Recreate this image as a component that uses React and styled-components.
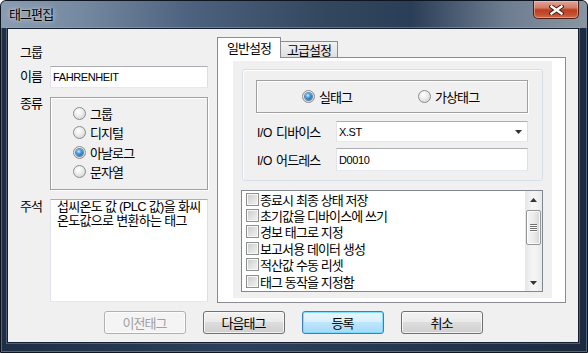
import React from 'react'
import styled, { createGlobalStyle } from 'styled-components'

const GlobalStyle = createGlobalStyle`
  html, body { margin: 0; padding: 0; background: #fff; }
  body {
    font-family: "Liberation Sans", "Noto Sans CJK KR", sans-serif;
    font-size: 13px;
    color: #000;
  }
  * { box-sizing: border-box; }
`

const Window = styled.div`
  width: 588px;
  height: 353px;
  display: flex;
  flex-direction: column;
  background: linear-gradient(90deg, #1e2e44 0%, #2c405b 40%, #24364e 70%, #1b2a3e 100%);
  border: 1px solid #0d1520;
  border-radius: 6px 6px 0 0;
  box-shadow: inset 0 0 0 1px rgba(150, 172, 200, 0.45);
  overflow: hidden;
`

const TitleBar = styled.div`
  flex: none;
  height: 27px;
  display: flex;
  justify-content: space-between;
  align-items: flex-start;
  background: linear-gradient(90deg, #8a9cb0 0%, #7488a0 14%, #4d627e 32%, #33475f 55%, #2b3e57 70%, #6d7d90 86%, #8995a1 100%);
`

const Title = styled.div`
  padding: 7px 0 0 8px;
  line-height: 14px;
  letter-spacing: -0.9px;
  color: #000;
  text-shadow: 0 0 6px rgba(255, 255, 255, 0.7), 0 0 2px rgba(255, 255, 255, 0.5);
`

const CloseButton = styled.div`
  width: 46px;
  height: 18px;
  margin-right: 8px;
  display: flex;
  align-items: center;
  justify-content: center;
  border: 1px solid #47201a;
  border-top: none;
  border-radius: 0 0 5px 5px;
  background: linear-gradient(180deg, #e3a597 0%, #d27a66 40%, #bb3f22 52%, #c5502f 80%, #d66a45 100%);
  box-shadow: inset 0 0 0 1px rgba(255, 210, 200, 0.45);
`

const Frame = styled.div`
  flex: 1;
  display: flex;
  padding: 0 8px 9px 6px;
`

const Client = styled.div`
  flex: 1;
  display: flex;
  flex-direction: column;
  gap: 8px;
  padding: 8px 12px 8px 12px;
  background: #f0f0f0;
  border: 1px solid #14202f;
  box-shadow: 0 0 0 1px rgba(170, 190, 215, 0.35);
`

const Main = styled.div`
  height: 266px;
  display: grid;
  grid-template-columns: 188px 1fr;
  column-gap: 9px;
`

const LeftColumn = styled.div`
  display: flex;
  flex-direction: column;
`

const Heading = styled.div`
  height: 29px;
  display: flex;
  align-items: center;
  letter-spacing: -0.9px;
`

const FieldRow = styled.div`
  display: grid;
  grid-template-columns: 30px 158px;
  height: ${p => p.$h}px;
  margin-top: ${p => p.$mt || 0}px;
`

const Label = styled.div`
  letter-spacing: -0.9px;
  line-height: 14px;
  padding-top: ${p => p.$pt || 0}px;
  align-self: ${p => (p.$center ? 'center' : 'start')};
`

const Edit = styled.div`
  background: #fff;
  border: 1px solid;
  border-color: #abadb3 #dbdfe6 #e3e9ef #e2e3ea;
  padding-left: 2px;
  display: flex;
  align-items: center;
  font-size: 11px;
  letter-spacing: -0.4px;
`

const Combo = styled(Edit)`
  justify-content: space-between;
  padding-right: 5px;
`

const Memo = styled.div`
  background: #fff;
  border: 1px solid;
  border-color: #abadb3 #dbdfe6 #e3e9ef #e2e3ea;
  padding: 0 0 0 6px;
  line-height: 14px;
  letter-spacing: -0.7px;
  white-space: nowrap;
  overflow: hidden;
`

const Sunken = styled.div`
  border: 1px solid #a0a0a0;
  box-shadow: 1px 1px 0 #fff, inset 1px 1px 0 #fff;
`

const TypeBox = styled(Sunken)`
  display: flex;
  flex-direction: column;
  padding: 6px 0 0 22px;
`

const RadioItem = styled.div`
  height: 19.3px;
  display: flex;
  align-items: center;
  gap: 4px;
  letter-spacing: -0.9px;
`

const RadioDot = styled.span`
  width: 13px;
  height: 13px;
  flex: none;
  border-radius: 50%;
  border: 1px solid #8a8c8e;
  background: radial-gradient(circle at 40% 35%, #ffffff 0%, #ececec 45%, #c7c9cb 100%);
  display: flex;
  align-items: center;
  justify-content: center;
  &::after {
    content: '';
    width: 7px;
    height: 7px;
    border-radius: 50%;
    display: ${p => (p.$on ? 'block' : 'none')};
    background: radial-gradient(circle at 40% 35%, #c4ecff 0%, #3a9be0 40%, #0f4e8e 100%);
    box-shadow: 0 0 0 1px rgba(20, 60, 110, 0.6);
  }
`

const RightColumn = styled.div`
  display: flex;
  flex-direction: column;
`

const TabStrip = styled.div`
  height: 20px;
  display: flex;
  align-items: flex-end;
`

const Tab = styled.div`
  height: ${p => (p.$active ? 21 : 16)}px;
  width: ${p => (p.$active ? 64 : 58)}px;
  margin-left: ${p => (p.$active ? 0 : -1)}px;
  margin-bottom: ${p => (p.$active ? -1 : 0)}px;
  position: relative;
  z-index: ${p => (p.$active ? 1 : 0)};
  display: flex;
  align-items: center;
  justify-content: center;
  padding-bottom: ${p => (p.$active ? 2 : 0)}px;
  border: 1px solid #898c95;
  border-bottom: none;
  background: ${p => (p.$active ? '#fff' : 'linear-gradient(180deg, #f2f2f2 0%, #e9e9e9 50%, #dedede 100%)')};
  letter-spacing: -0.9px;
`

const Panel = styled.div`
  height: 246px;
  border: 1px solid #898c95;
  background: #fff;
  padding: 3px 13px 4px 15px;
  display: flex;
`

const Page = styled.div`
  flex: 1;
  background: #f0f0f0;
  display: flex;
  flex-direction: column;
  gap: 9px;
  padding: 8px 9px 6px 9px;
`

const GroupBox = styled.div`
  height: 112px;
  border: 1px solid #d5dfe5;
  border-radius: 3px;
  box-shadow: inset 1px 1px 0 #fff;
  padding: 10px 14px 0 13px;
  display: flex;
  flex-direction: column;
`

const RadioFrame = styled(Sunken)`
  height: 33px;
  display: grid;
  grid-template-columns: 116px auto;
  align-items: center;
  padding-left: 45px;
`

const SettingRow = styled.div`
  display: grid;
  grid-template-columns: 80px 1fr;
  height: ${p => p.$h}px;
  margin-top: ${p => p.$mt}px;
`

const SettingLabel = styled.div`
  align-self: center;
  padding-left: 1px;
  letter-spacing: -0.9px;
`

const Small = styled.span`
  font-size: 12px;
  letter-spacing: -0.3px;
  margin-right: 4px;
`

const ListBox = styled.div`
  height: 102px;
  border: 1px solid #828790;
  background: #fff;
  display: flex;
  margin-left: -1px;
`

const Items = styled.div`
  flex: 1;
  padding: 0 0 0 4px;
`

const CheckItem = styled.div`
  height: 16.4px;
  display: flex;
  align-items: center;
  gap: 1px;
  letter-spacing: -0.9px;
  white-space: nowrap;
`

const CheckBox = styled.span`
  width: 13px;
  height: 13px;
  flex: none;
  border: 1px solid #8e8f8f;
  background: linear-gradient(135deg, #c9cacc 0%, #e3e4e5 60%, #f2f2f2 100%);
  box-shadow: inset 0 0 0 1px #f7f7f7;
`

const ScrollBar = styled.div`
  width: 17px;
  display: flex;
  flex-direction: column;
  background: linear-gradient(90deg, #e6e6e6 0%, #f4f4f4 40%, #f4f4f4 60%, #e9e9e9 100%);
`

const ArrowButton = styled.div`
  height: 17px;
  flex: none;
  display: flex;
  align-items: center;
  justify-content: center;
`

const Track = styled.div`
  flex: 1;
  padding: 2px 1px 0 1px;
`

const Thumb = styled.div`
  height: 35px;
  border: 1px solid #979797;
  border-radius: 2px;
  background: linear-gradient(90deg, #f4f4f4 0%, #ececec 50%, #d6d6d6 100%);
  box-shadow: inset 0 0 0 1px rgba(255, 255, 255, 0.8);
  display: flex;
  flex-direction: column;
  align-items: center;
  justify-content: center;
  gap: 1px;
`

const Grip = styled.span`
  width: 7px;
  height: 1px;
  background: #6f6f6f;
  box-shadow: 0 1px 0 #fff;
`

const ButtonRow = styled.div`
  display: flex;
  justify-content: center;
  gap: 17px;
`

const Button = styled.div`
  width: 82px;
  height: 23px;
  display: flex;
  align-items: center;
  justify-content: center;
  border-radius: 3px;
  letter-spacing: -0.9px;
  border: 1px solid ${p => (p.$primary ? '#3c7fb1' : p.$disabled ? '#adb2b5' : '#707070')};
  color: ${p => (p.$disabled ? '#a0a0a0' : '#000')};
  background: ${p =>
    p.$disabled
      ? '#f4f4f4'
      : p.$primary
      ? 'linear-gradient(180deg, #eaf6fd 0%, #d9f0fc 45%, #bee6fd 50%, #a7d9f5 100%)'
      : 'linear-gradient(180deg, #f2f2f2 0%, #ebebeb 45%, #dddddd 50%, #cfcfcf 100%)'};
  box-shadow: inset 0 0 0 1px ${p => (p.$primary ? 'rgba(120, 220, 255, 0.9)' : 'rgba(255, 255, 255, 0.7)')};
`

const Triangle = ({ up }) => (
  <svg width="7" height="4" viewBox="0 0 7 4">
    <path d={up ? 'M0 4 L3.5 0 L7 4 Z' : 'M0 0 L7 0 L3.5 4 Z'} fill="#333" />
  </svg>
)

const CloseGlyph = () => (
  <svg width="15" height="10" viewBox="0 0 15 10">
    <path d="M2.5 1.5 L12.5 8.5 M12.5 1.5 L2.5 8.5" stroke="#4a2016" strokeWidth="4.4" strokeLinecap="square" />
    <path d="M2.5 1.5 L12.5 8.5 M12.5 1.5 L2.5 8.5" stroke="#fff" strokeWidth="2.4" strokeLinecap="square" />
  </svg>
)

const kinds = [
  { label: '그룹', on: false },
  { label: '디지털', on: false },
  { label: '아날로그', on: true },
  { label: '문자열', on: false },
]

const options = [
  '종료시 최종 상태 저장',
  '초기값을 디바이스에 쓰기',
  '경보 태그로 지정',
  '보고서용 데이터 생성',
  '적산값 수동 리셋',
  '태그 동작을 지정함',
]

export default function App() {
  return (
    <>
      <GlobalStyle />
      <Window>
        <TitleBar>
          <Title>태그편집</Title>
          <CloseButton>
            <CloseGlyph />
          </CloseButton>
        </TitleBar>
        <Frame>
          <Client>
            <Main>
              <LeftColumn>
                <Heading>그룹</Heading>
                <FieldRow $h={22}>
                  <Label $center>이름</Label>
                  <Edit>FAHRENHEIT</Edit>
                </FieldRow>
                <FieldRow $h={93} $mt={9}>
                  <Label>종류</Label>
                  <TypeBox>
                    {kinds.map(k => (
                      <RadioItem key={k.label}>
                        <RadioDot $on={k.on} />
                        {k.label}
                      </RadioItem>
                    ))}
                  </TypeBox>
                </FieldRow>
                <FieldRow $h={103} $mt={9}>
                  <Label $pt={1}>주석</Label>
                  <Memo>
                    <div>섭씨온도 값 (PLC 값)을 화씨</div>
                    <div>온도값으로 변환하는 태그</div>
                  </Memo>
                </FieldRow>
              </LeftColumn>

              <RightColumn>
                <TabStrip>
                  <Tab $active>일반설정</Tab>
                  <Tab>고급설정</Tab>
                </TabStrip>
                <Panel>
                  <Page>
                    <GroupBox>
                      <RadioFrame>
                        <RadioItem>
                          <RadioDot $on />
                          실태그
                        </RadioItem>
                        <RadioItem>
                          <RadioDot />
                          가상태그
                        </RadioItem>
                      </RadioFrame>
                      <SettingRow $h={21} $mt={8}>
                        <SettingLabel><Small>I/O</Small>디바이스</SettingLabel>
                        <Combo>
                          X.ST
                          <Triangle />
                        </Combo>
                      </SettingRow>
                      <SettingRow $h={23} $mt={6}>
                        <SettingLabel><Small>I/O</Small>어드레스</SettingLabel>
                        <Edit>D0010</Edit>
                      </SettingRow>
                    </GroupBox>
                    <ListBox>
                      <Items>
                        {options.map(o => (
                          <CheckItem key={o}>
                            <CheckBox />
                            {o}
                          </CheckItem>
                        ))}
                      </Items>
                      <ScrollBar>
                        <ArrowButton>
                          <Triangle up />
                        </ArrowButton>
                        <Track>
                          <Thumb>
                            <Grip />
                            <Grip />
                            <Grip />
                            <Grip />
                          </Thumb>
                        </Track>
                        <ArrowButton>
                          <Triangle />
                        </ArrowButton>
                      </ScrollBar>
                    </ListBox>
                  </Page>
                </Panel>
              </RightColumn>
            </Main>
            <ButtonRow>
              <Button $disabled>이전태그</Button>
              <Button>다음태그</Button>
              <Button $primary>등록</Button>
              <Button>취소</Button>
            </ButtonRow>
          </Client>
        </Frame>
      </Window>
    </>
  )
}
